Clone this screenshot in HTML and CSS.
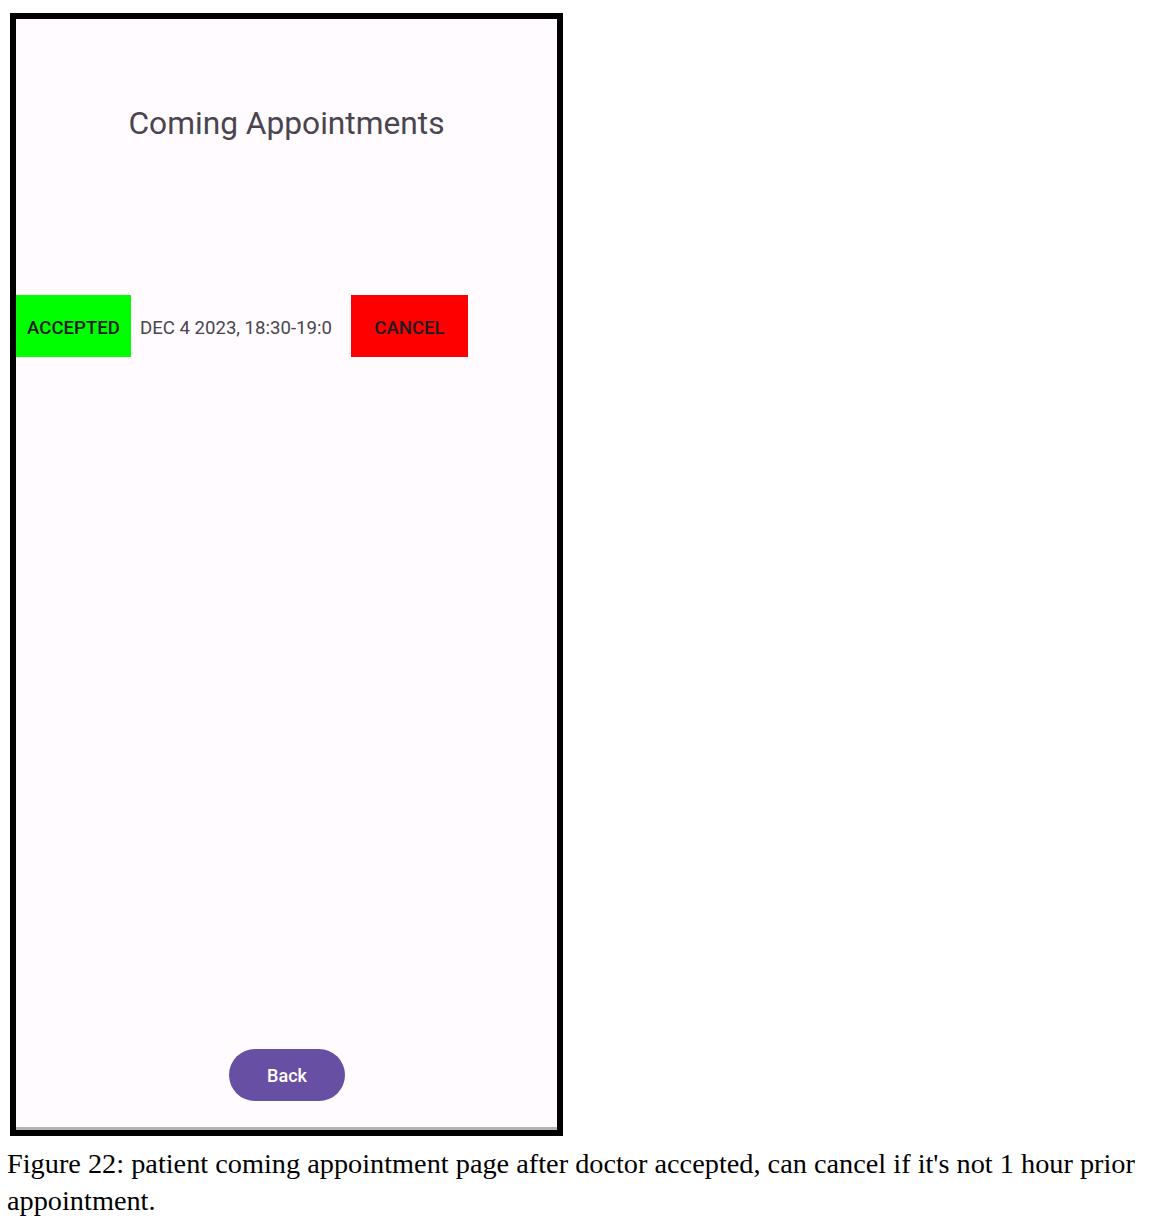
FILE: index.html
```html
<!DOCTYPE html>
<html>
<head>
<meta charset="utf-8">
<link rel="stylesheet" href="styles.css">
</head>
<body>
<div class="figure">
  <div class="phone">
    <div class="screen">
      <h1 class="title">Coming Appointments</h1>
      <div class="row">
        <div class="status">ACCEPTED</div>
        <div class="date">DEC 4 2023, 18:30-19:0</div>
        <div class="cancel">CANCEL</div>
      </div>
      <div class="spacer"></div>
      <div class="back-wrap"><div class="back">Back</div></div>
    </div>
  </div>
  <p class="caption">Figure 22: patient coming appointment page after doctor accepted, can cancel if it's not 1 hour prior appointment.</p>
</div>
</body>
</html>
```
FILE: styles.css
```css
html, body {
  margin: 0;
  padding: 0;
  background: #ffffff;
}
.figure {
  padding: 13px 0 0 0;
}
.phone {
  margin-left: 10px;
  width: 541px;
  height: 1111px;
  border: 6px solid #000;
  background: #fffbfe;
  display: flex;
  flex-direction: column;
}
.screen {
  flex: 1;
  display: flex;
  flex-direction: column;
  border-bottom: 3px solid #b3b3b3;
  font-family: Roboto, "Liberation Sans", sans-serif;
}
.title {
  margin: 83px 0 0 0;
  text-align: center;
  font-weight: 400;
  font-size: 31.7px;
  line-height: 44px;
  color: #49454f;
}
.row {
  margin-top: 149px;
  display: flex;
  align-items: center;
  height: 62px;
}
.status {
  box-sizing: border-box;
  width: 115px;
  height: 62px;
  padding-top: 3px;
  background: #00ff00;
  display: flex;
  align-items: center;
  justify-content: center;
  font-weight: 500;
  font-size: 18.6px;
  color: #1d1b20;
}
.date {
  margin-left: 9px;
  padding-top: 3px;
  width: 202px;
  font-size: 18.6px;
  color: #49454f;
  white-space: nowrap;
  overflow: hidden;
}
.cancel {
  box-sizing: border-box;
  margin-left: 9px;
  width: 117px;
  height: 62px;
  padding-top: 3px;
  background: #ff0000;
  display: flex;
  align-items: center;
  justify-content: center;
  font-weight: 500;
  font-size: 18.6px;
  color: #1d1b20;
}
.spacer {
  flex: 1;
}
.back-wrap {
  display: flex;
  justify-content: center;
  padding-left: 1px;
  margin-bottom: 26px;
}
.back {
  width: 116px;
  height: 52px;
  border-radius: 26px;
  background: #6750a4;
  color: #ffffff;
  font-weight: 500;
  font-size: 18px;
  display: flex;
  align-items: center;
  justify-content: center;
}
.caption {
  margin: 9px 0 0 7px;
  width: 1150px;
  font-family: "Liberation Serif", "Times New Roman", serif;
  font-size: 28.3px;
  line-height: 37px;
  color: #000;
}
```
